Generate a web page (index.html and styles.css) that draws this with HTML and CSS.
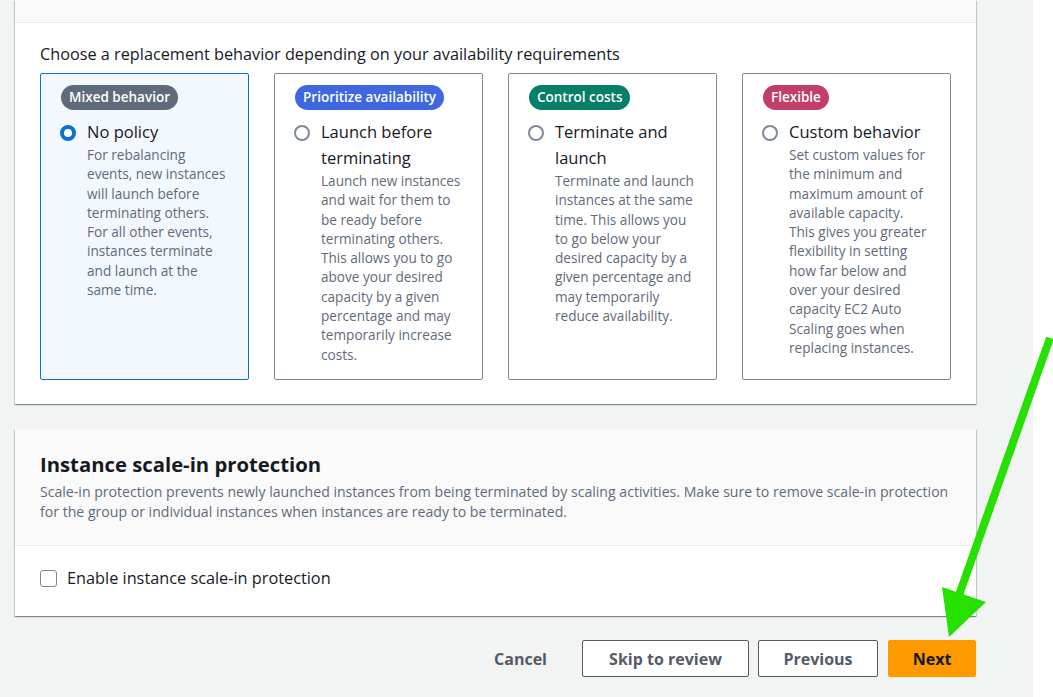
FILE: index.html
```html
<!DOCTYPE html>
<html>
<head>
<meta charset="utf-8">
<link rel="stylesheet" href="styles.css">
</head>
<body>
<div class="page">
  <main class="main">
    <section class="card">
      <div class="card-head-cut"></div>
      <div class="card-body">
        <p class="lead">Choose a replacement behavior depending on your availability requirements</p>
        <div class="tiles">
          <div class="tile selected">
            <span class="badge grey">Mixed behavior</span>
            <div class="opt">
              <span class="radio on"></span>
              <div class="opt-text">
                <div class="opt-label">No policy</div>
                <div class="opt-desc">For rebalancing events, new instances will launch before terminating others. For all other events, instances terminate and launch at the same time.</div>
              </div>
            </div>
          </div>
          <div class="tile">
            <span class="badge blue">Prioritize availability</span>
            <div class="opt">
              <span class="radio"></span>
              <div class="opt-text">
                <div class="opt-label">Launch before terminating</div>
                <div class="opt-desc">Launch new instances and wait for them to be ready before terminating others. This allows you to go above your desired capacity by a given percentage and may temporarily increase costs.</div>
              </div>
            </div>
          </div>
          <div class="tile">
            <span class="badge green">Control costs</span>
            <div class="opt">
              <span class="radio"></span>
              <div class="opt-text">
                <div class="opt-label">Terminate and launch</div>
                <div class="opt-desc">Terminate and launch instances at the same time. This allows you to go below your desired capacity by a given percentage and may temporarily reduce availability.</div>
              </div>
            </div>
          </div>
          <div class="tile">
            <span class="badge pink">Flexible</span>
            <div class="opt">
              <span class="radio"></span>
              <div class="opt-text">
                <div class="opt-label">Custom behavior</div>
                <div class="opt-desc">Set custom values for the minimum and maximum amount of available capacity. This gives you greater flexibility in setting how far below and over your desired capacity EC2 Auto Scaling goes when replacing instances.</div>
              </div>
            </div>
          </div>
        </div>
      </div>
    </section>

    <section class="card card2">
      <div class="card-head">
        <h2 class="title">Instance scale-in protection</h2>
        <p class="desc">Scale-in protection prevents newly launched instances from being terminated by scaling activities. Make sure to remove scale-in protection for the group or individual instances when instances are ready to be terminated.</p>
      </div>
      <div class="card-body2">
        <label class="check"><span class="box"></span><span>Enable instance scale-in protection</span></label>
      </div>
    </section>

    <div class="actions">
      <button class="btn link">Cancel</button>
      <button class="btn normal skip">Skip to review</button>
      <button class="btn normal prev">Previous</button>
      <button class="btn primary">Next</button>
    </div>
  </main>
  <aside class="side"></aside>
</div>
<svg class="arrow" width="1053" height="697" viewBox="0 0 1053 697">
  <line x1="1050" y1="338" x2="958" y2="598" stroke="#26e000" stroke-width="8"/>
  <polygon points="942,587 986,602 949,637" fill="#26e000"/>
</svg>
</body>
</html>
```
FILE: styles.css
```css
* { box-sizing: border-box; }
html, body { margin: 0; padding: 0; }
body {
  font-family: "Open Sans", "Noto Sans", sans-serif;
  color: #16191f;
  background: #ffffff;
  width: 1053px;
  height: 697px;
  overflow: hidden;
  position: relative;
}
.page { display: flex; height: 697px; }
.main {
  width: 1033px;
  background: #f2f3f3;
  padding: 0 57px 0 15px;
  display: flex;
  flex-direction: column;
}
.side { flex: 1; background: #ffffff; }

.card {
  background: #ffffff;
  box-shadow: 0 1px 1px 0 rgba(0,28,36,.3), 1px 1px 1px 0 rgba(0,28,36,.15), -1px 1px 1px 0 rgba(0,28,36,.15);
}
.card-head-cut {
  height: 23px;
  background: #fafafa;
  border-bottom: 1px solid #eaeded;
}
.card-body { padding: 21px 25px 24px 25px; }
.lead {
  margin: 0 0 9px 0;
  font-size: 16.25px;
  line-height: 20px;
  color: #16191f;
}
.tiles { display: flex; gap: 25px; }
.tile {
  width: 209px;
  height: 307px;
  border: 1px solid #7d8998;
  border-radius: 2px;
  padding: 11px 20px 0 19px;
  display: flex;
  flex-direction: column;
  align-items: flex-start;
}
.tile.selected { border-color: #0972d3; background: #f2f8fd; }
.badge {
  display: inline-block;
  height: 25px;
  line-height: 25px;
  padding: 0 8px;
  margin-left: 1px;
  border-radius: 13px;
  font-size: 13.5px;
  font-weight: 600;
  color: #ffffff;
}
.badge.grey { background: #5f6b7a; }
.badge.blue { background: #3f68e0; }
.badge.green { background: #067f68; }
.badge.pink { background: #c33d69; }

.opt { display: flex; margin-top: 9px; }
.radio {
  flex: none;
  width: 16px; height: 16px;
  border-radius: 50%;
  border: 2px solid #7d8998;
  background: #ffffff;
  margin-top: 6px;
  margin-right: 11px;
  position: relative;
}
.radio.on { border: 4px solid #0972d3; }
.opt-label {
  font-size: 16.5px;
  line-height: 26px;
  color: #16191f;
}
.opt-desc {
  font-size: 13.6px;
  line-height: 19.3px;
  color: #5f6b7a;
  margin-top: 0;
}

.card2 { margin-top: 25px; }
.card-head {
  background: #fafafa;
  border-bottom: 1px solid #eaeded;
  padding: 21px 25px 23px 25px;
}
.title {
  margin: 0;
  font-size: 20.3px;
  line-height: 28px;
  font-weight: 700;
  color: #16191f;
}
.desc {
  margin: 4px 0 0 0;
  font-size: 14.1px;
  line-height: 20px;
  color: #5f6b7a;
}
.card-body2 { padding: 21px 25px 27px 25px; }
.check {
  display: flex;
  align-items: center;
  gap: 10px;
  font-size: 16.3px;
  line-height: 22px;
  color: #16191f;
}
.box {
  width: 17px; height: 17px;
  border: 1.5px solid #7d8998;
  border-radius: 3px;
  background: #fff;
}

.actions {
  display: flex;
  justify-content: flex-end;
  align-items: center;
  margin-top: 24px;
}
.btn {
  font-family: inherit;
  font-size: 16px;
  font-weight: 700;
  height: 37px;
  border-radius: 2px;
  color: #545b64;
  cursor: pointer;
}
.btn.link { background: transparent; border: none; padding: 0; margin-right: 35px; }
.btn.normal { background: #ffffff; border: 1px solid #545b64; }
.skip { width: 167px; margin-right: 9px; }
.prev { width: 120px; margin-right: 10px; }
.btn.primary { background: #ff9900; border: 1px solid #ff9900; color: #16191f; width: 88px; }

.arrow { position: absolute; left: 0; top: 0; pointer-events: none; }
```
